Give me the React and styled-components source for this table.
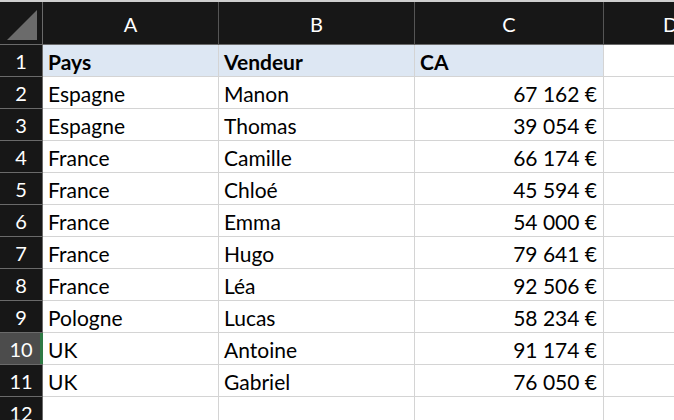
import React from "react";
import styled, { createGlobalStyle } from "styled-components";

const GlobalStyle = createGlobalStyle`
    html, body {
        margin: 0;
        padding: 0;
        background: #ffffff;
        overflow: hidden;
    }
    body {
        font-family: Lato, "Open Sans", "Liberation Sans", sans-serif;
    }
`;

const COLS = "43px 176px 196px 189px 134px";

const SheetStyled = styled.div`
    width: 674px;
    height: 420px;
    border-top: 2px solid #cfcfcf;
    box-sizing: border-box;
    overflow: hidden;
`;

const HeaderRowStyled = styled.div`
    display: grid;
    grid-template-columns: ${COLS};
    height: 43px;
    background: #171717;
`;

const ColHeadStyled = styled.div`
    display: flex;
    align-items: center;
    justify-content: center;
    color: #ffffff;
    font-size: 20px;
    border-right: 1px solid #555555;
    border-bottom: 1px solid #6a6a6a;
    padding-top: 2px;
    box-sizing: border-box;
`;

const CornerStyled = styled.div`
    display: flex;
    align-items: flex-end;
    justify-content: flex-end;
    padding: 0 5px 4px 0;
    border-right: 1px solid #6a6a6a;
    border-bottom: 1px solid #6a6a6a;
    box-sizing: border-box;
`;

const RowStyled = styled.div`
    display: grid;
    grid-template-columns: ${COLS};
    height: 32px;
`;

const RowHeadStyled = styled.div`
    position: relative;
    display: flex;
    align-items: center;
    justify-content: center;
    background: ${(p) => (p.$active ? "#4c4c4c" : "#171717")};
    color: #ffffff;
    font-size: 20px;
    border-bottom: 1px solid #6a6a6a;
    border-right: 1px solid #6a6a6a;
    padding-top: 1px;
    box-sizing: border-box;

    &::after {
        content: "";
        display: ${(p) => (p.$active ? "block" : "none")};
        position: absolute;
        right: -1px;
        top: 0;
        bottom: 0;
        width: 3px;
        background: #2f7a45;
    }
`;

const CellStyled = styled.div`
    display: flex;
    align-items: center;
    justify-content: ${(p) => (p.$right ? "flex-end" : "flex-start")};
    padding: 2px 6px 0 5px;
    background: ${(p) => (p.$head ? "#dde7f3" : "#ffffff")};
    color: #000000;
    font-size: 21px;
    font-weight: ${(p) => (p.$head ? 700 : 400)};
    border-right: 1px solid #d4d4d4;
    border-bottom: 1px solid #d4d4d4;
    box-sizing: border-box;
    white-space: nowrap;
`;

const rows = [
    ["Espagne", "Manon", "67 162 €"],
    ["Espagne", "Thomas", "39 054 €"],
    ["France", "Camille", "66 174 €"],
    ["France", "Chloé", "45 594 €"],
    ["France", "Emma", "54 000 €"],
    ["France", "Hugo", "79 641 €"],
    ["France", "Léa", "92 506 €"],
    ["Pologne", "Lucas", "58 234 €"],
    ["UK", "Antoine", "91 174 €"],
    ["UK", "Gabriel", "76 050 €"],
];

export default function App() {
    return (
        <>
            <GlobalStyle />
            <SheetStyled>
                <HeaderRowStyled>
                    <CornerStyled>
                        <svg width="30" height="30" viewBox="0 0 30 30">
                            <polygon points="30,0 30,30 0,30" fill="#6b6b6b" />
                        </svg>
                    </CornerStyled>
                    {["A", "B", "C", "D"].map((c) => (
                        <ColHeadStyled key={c}>{c}</ColHeadStyled>
                    ))}
                </HeaderRowStyled>
                <RowStyled>
                    <RowHeadStyled>1</RowHeadStyled>
                    <CellStyled $head>Pays</CellStyled>
                    <CellStyled $head>Vendeur</CellStyled>
                    <CellStyled $head>CA</CellStyled>
                    <CellStyled />
                </RowStyled>
                {rows.map((r, i) => (
                    <RowStyled key={i}>
                        <RowHeadStyled $active={i + 2 === 10}>{i + 2}</RowHeadStyled>
                        <CellStyled>{r[0]}</CellStyled>
                        <CellStyled>{r[1]}</CellStyled>
                        <CellStyled $right>{r[2]}</CellStyled>
                        <CellStyled />
                    </RowStyled>
                ))}
                <RowStyled>
                    <RowHeadStyled>12</RowHeadStyled>
                    <CellStyled />
                    <CellStyled />
                    <CellStyled />
                    <CellStyled />
                </RowStyled>
            </SheetStyled>
        </>
    );
}
